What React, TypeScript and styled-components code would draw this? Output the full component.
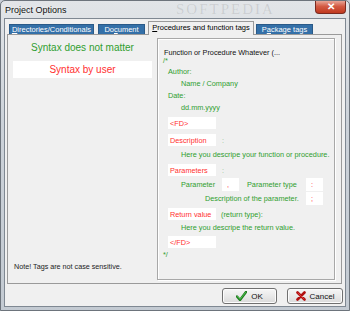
import React from 'react';
import styled, { createGlobalStyle } from 'styled-components';

const GlobalStyle = createGlobalStyle`
  html, body { margin: 0; padding: 0; }
  body {
    font-family: "Liberation Sans", Arial, sans-serif;
    background: #c8ced6;
  }
`;

const Window = styled.div`
  width: 350px;
  height: 311px;
  box-sizing: border-box;
  display: flex;
  flex-direction: column;
  background: linear-gradient(180deg, #e2e5e8 0%, #ccd2d9 40%, #c3cad2 100%);
  border: 1px solid #6d747c;
  border-radius: 5px 5px 0 0;
  overflow: hidden;
`;

const TitleBar = styled.div`
  height: 17px;
  flex: none;
  display: flex;
  align-items: flex-start;
  padding-left: 4px;
  position: relative;
`;

const TitleText = styled.div`
  font-size: 9px;
  color: #111;
  padding-top: 4px;
  text-shadow: 0 0 4px #fff;
`;

const Watermark = styled.div`
  position: absolute;
  left: 175px;
  top: 0;
  font-family: "Liberation Serif", serif;
  font-size: 15px;
  line-height: 16px;
  letter-spacing: 2px;
  color: rgba(90, 90, 90, 0.16);
`;

const CloseButton = styled.div`
  margin-left: auto;
  margin-right: 3px;
  width: 29px;
  height: 12px;
  border: 1px solid #7a2a20;
  border-top: none;
  border-radius: 0 0 4px 4px;
  background: linear-gradient(180deg, #e8a596 0%, #d35a43 45%, #c0391f 100%);
  color: #fff;
  font-size: 10px;
  font-weight: bold;
  display: flex;
  align-items: center;
  justify-content: center;
  line-height: 1;
  position: relative;
`;

const Client = styled.div`
  flex: 1;
  margin: 0 3px 3px 3px;
  border: 1px solid #7f8892;
  background: #f0f0f0;
  display: flex;
  flex-direction: column;
  padding: 1px 2px 0 1px;
`;

const TabStrip = styled.div`
  height: 14px;
  display: flex;
  align-items: flex-end;
  padding-left: 3px;
  position: relative;
  z-index: 1;
`;

const Tab = styled.div<{ $w: number; $gap: number; $active?: boolean }>`
  width: ${(p) => p.$w}px;
  margin-right: ${(p) => p.$gap}px;
  box-sizing: border-box;
  height: ${(p) => (p.$active ? 14 : 10)}px;
  font-size: 7.5px;
  display: flex;
  align-items: center;
  justify-content: center;
  background: ${(p) => (p.$active ? '#f0f0f0' : '#3470a8')};
  color: ${(p) => (p.$active ? '#000' : '#fff')};
  border: 1px solid ${(p) => (p.$active ? '#9a9a9a' : '#2a5a88')};
  border-bottom: none;
  margin-bottom: ${(p) => (p.$active ? -1 : 0)}px;
  padding-bottom: ${(p) => (p.$active ? 2 : 0)}px;
  white-space: nowrap;
`;

const Panel = styled.div`
  width: 335px;
  height: 250px;
  box-sizing: border-box;
  margin-left: 1px;
  border: 1px solid #9a9a9a;
  display: flex;
  padding: 3px 6px 3px 0;
`;

const LeftColumn = styled.div`
  width: 149px;
  flex: none;
  display: flex;
  flex-direction: column;
  padding-left: 5px;
  box-sizing: border-box;
`;

const BigGreen = styled.div`
  width: 139px;
  margin-top: 4px;
  font-size: 10px;
  line-height: 12px;
  color: #2f9e2f;
  text-align: center;
`;

const UserBox = styled.div`
  width: 139px;
  height: 17px;
  margin-top: 7px;
  background: #fff;
  color: #ff3030;
  font-size: 10px;
  display: flex;
  align-items: center;
  justify-content: center;
`;

const Note = styled.div`
  margin-top: auto;
  margin-bottom: 8px;
  font-size: 7.2px;
  line-height: 10px;
  color: #222;
  padding-left: 1px;
`;

const GroupBox = styled.div`
  flex: 1;
  border: 1px solid #a8a8a8;
  box-shadow: inset 1px 1px 0 #fff, 1px 1px 0 #fff;
  display: flex;
  flex-direction: column;
  padding: 9px 0 0 6px;
  font-size: 7.3px;
`;

const Header = styled.div`
  height: 9px;
  line-height: 9px;
  color: #111;
`;

const Comment = styled.div<{ $top?: number }>`
  color: #2f9e2f;
  height: 8px;
  line-height: 8px;
  margin-top: ${(p) => p.$top ?? 0}px;
  margin-left: -1px;
`;

const Line = styled.div<{ $indent: number; $top?: number }>`
  height: 12px;
  line-height: 12px;
  color: #2f9e2f;
  padding-left: ${(p) => p.$indent}px;
  margin-top: ${(p) => p.$top ?? 0}px;
  white-space: nowrap;
`;

const TagRow = styled.div<{ $top: number }>`
  display: flex;
  align-items: center;
  height: 12px;
  margin-top: ${(p) => p.$top}px;
  padding-left: 4px;
  white-space: nowrap;
`;

const Tag = styled.div`
  width: 48px;
  height: 12px;
  box-sizing: border-box;
  background: #fff;
  color: #ff3030;
  padding-left: 2px;
  display: flex;
  align-items: center;
  flex: none;
`;

const After = styled.span<{ $gap: number }>`
  margin-left: ${(p) => p.$gap}px;
  color: #8fc48f;
`;

const AfterGreen = styled.span<{ $gap: number }>`
  margin-left: ${(p) => p.$gap}px;
  color: #2f9e2f;
`;

const ParamRow = styled.div<{ $top: number }>`
  display: flex;
  align-items: center;
  height: 13px;
  margin-top: ${(p) => p.$top}px;
  color: #2f9e2f;
  white-space: nowrap;
`;

const ParamLabel = styled.div<{ $w: number; $indent: number }>`
  width: ${(p) => p.$w}px;
  padding-left: ${(p) => p.$indent}px;
  box-sizing: border-box;
  flex: none;
`;

const Mini = styled.div`
  width: 17px;
  height: 13px;
  background: #fff;
  color: #ff3030;
  display: flex;
  align-items: center;
  padding-left: 5px;
  box-sizing: border-box;
  flex: none;
`;

const ButtonRow = styled.div`
  display: flex;
  justify-content: flex-end;
  gap: 10px;
  padding: 4px 0 0 0;
`;

const Button = styled.div<{ $w: number }>`
  width: ${(p) => p.$w}px;
  height: 16px;
  box-sizing: border-box;
  border: 1px solid #707070;
  border-radius: 3px;
  background: linear-gradient(180deg, #f6f6f6 0%, #e9e9e9 50%, #dadada 100%);
  box-shadow: inset 0 0 0 1px #fcfcfc;
  display: flex;
  align-items: center;
  justify-content: center;
  gap: 4px;
  font-size: 8px;
  color: #111;
`;

const CheckIcon = () => (
  <svg width="11" height="10" viewBox="0 0 11 10">
    <path d="M1 5.5 L4 9 L10 1" fill="none" stroke="#1e7a1e" strokeWidth="2.4" strokeLinecap="round" strokeLinejoin="round" />
    <path d="M1.5 5.5 L4 8.3 L9.5 1.5" fill="none" stroke="#4cc24c" strokeWidth="1" strokeLinecap="round" />
  </svg>
);

const CrossIcon = () => (
  <svg width="10" height="10" viewBox="0 0 10 10">
    <path d="M1.5 1.5 L8.5 8.5 M8.5 1.5 L1.5 8.5" stroke="#b01010" strokeWidth="2.6" strokeLinecap="round" />
    <path d="M2 2 L8 8" stroke="#e84040" strokeWidth="0.8" strokeLinecap="round" />
  </svg>
);

export default function App() {
  return (
    <>
      <GlobalStyle />
      <Window>
        <TitleBar>
          <TitleText>Project Options</TitleText>
          <Watermark>SOFTPEDIA</Watermark>
          <CloseButton>✕</CloseButton>
        </TitleBar>
        <Client>
          <TabStrip>
            <Tab $w={85} $gap={4}>
              <span><u>D</u>irectories/Conditionals</span>
            </Tab>
            <Tab $w={47} $gap={3}>
              <span>Do<u>c</u>ument</span>
            </Tab>
            <Tab $w={106} $gap={2} $active>
              <span><u>P</u>rocedures and function tags</span>
            </Tab>
            <Tab $w={57} $gap={0}>
              <span>P<u>a</u>ckage tags</span>
            </Tab>
          </TabStrip>
          <Panel>
            <LeftColumn>
              <BigGreen>Syntax does not matter</BigGreen>
              <UserBox>Syntax by user</UserBox>
              <Note>Note! Tags are not case sensitive.</Note>
            </LeftColumn>
            <GroupBox>
              <Header>Function or Procedure Whatever (...</Header>
              <Comment>/*</Comment>
              <Line $indent={4} $top={1}>Author:</Line>
              <Line $indent={17}>Name / Company</Line>
              <Line $indent={4}>Date:</Line>
              <Line $indent={17}>dd.mm.yyyy</Line>
              <TagRow $top={3}>
                <Tag>&lt;FD&gt;</Tag>
              </TagRow>
              <TagRow $top={5}>
                <Tag>Description</Tag>
                <After $gap={6}>:</After>
              </TagRow>
              <Line $indent={17} $top={3}>Here you descripe your function or procedure.</Line>
              <TagRow $top={3}>
                <Tag>Parameters</Tag>
                <After $gap={6}>:</After>
              </TagRow>
              <ParamRow $top={2}>
                <ParamLabel $w={58} $indent={17}>Parameter</ParamLabel>
                <Mini>,</Mini>
                <ParamLabel $w={67} $indent={8}>Parameter type</ParamLabel>
                <Mini>:</Mini>
              </ParamRow>
              <ParamRow $top={1}>
                <ParamLabel $w={142} $indent={41}>Description of the parameter.</ParamLabel>
                <Mini>;</Mini>
              </ParamRow>
              <TagRow $top={3}>
                <Tag>Return value</Tag>
                <AfterGreen $gap={5}>(return type):</AfterGreen>
              </TagRow>
              <Line $indent={17} $top={2}>Here you descripe the return value.</Line>
              <TagRow $top={2}>
                <Tag>&lt;/FD&gt;</Tag>
              </TagRow>
              <Comment $top={3}>*/</Comment>
            </GroupBox>
          </Panel>
          <ButtonRow>
            <Button $w={55}>
              <CheckIcon />
              <span>OK</span>
            </Button>
            <Button $w={56}>
              <CrossIcon />
              <span>Cancel</span>
            </Button>
          </ButtonRow>
        </Client>
      </Window>
    </>
  );
}
